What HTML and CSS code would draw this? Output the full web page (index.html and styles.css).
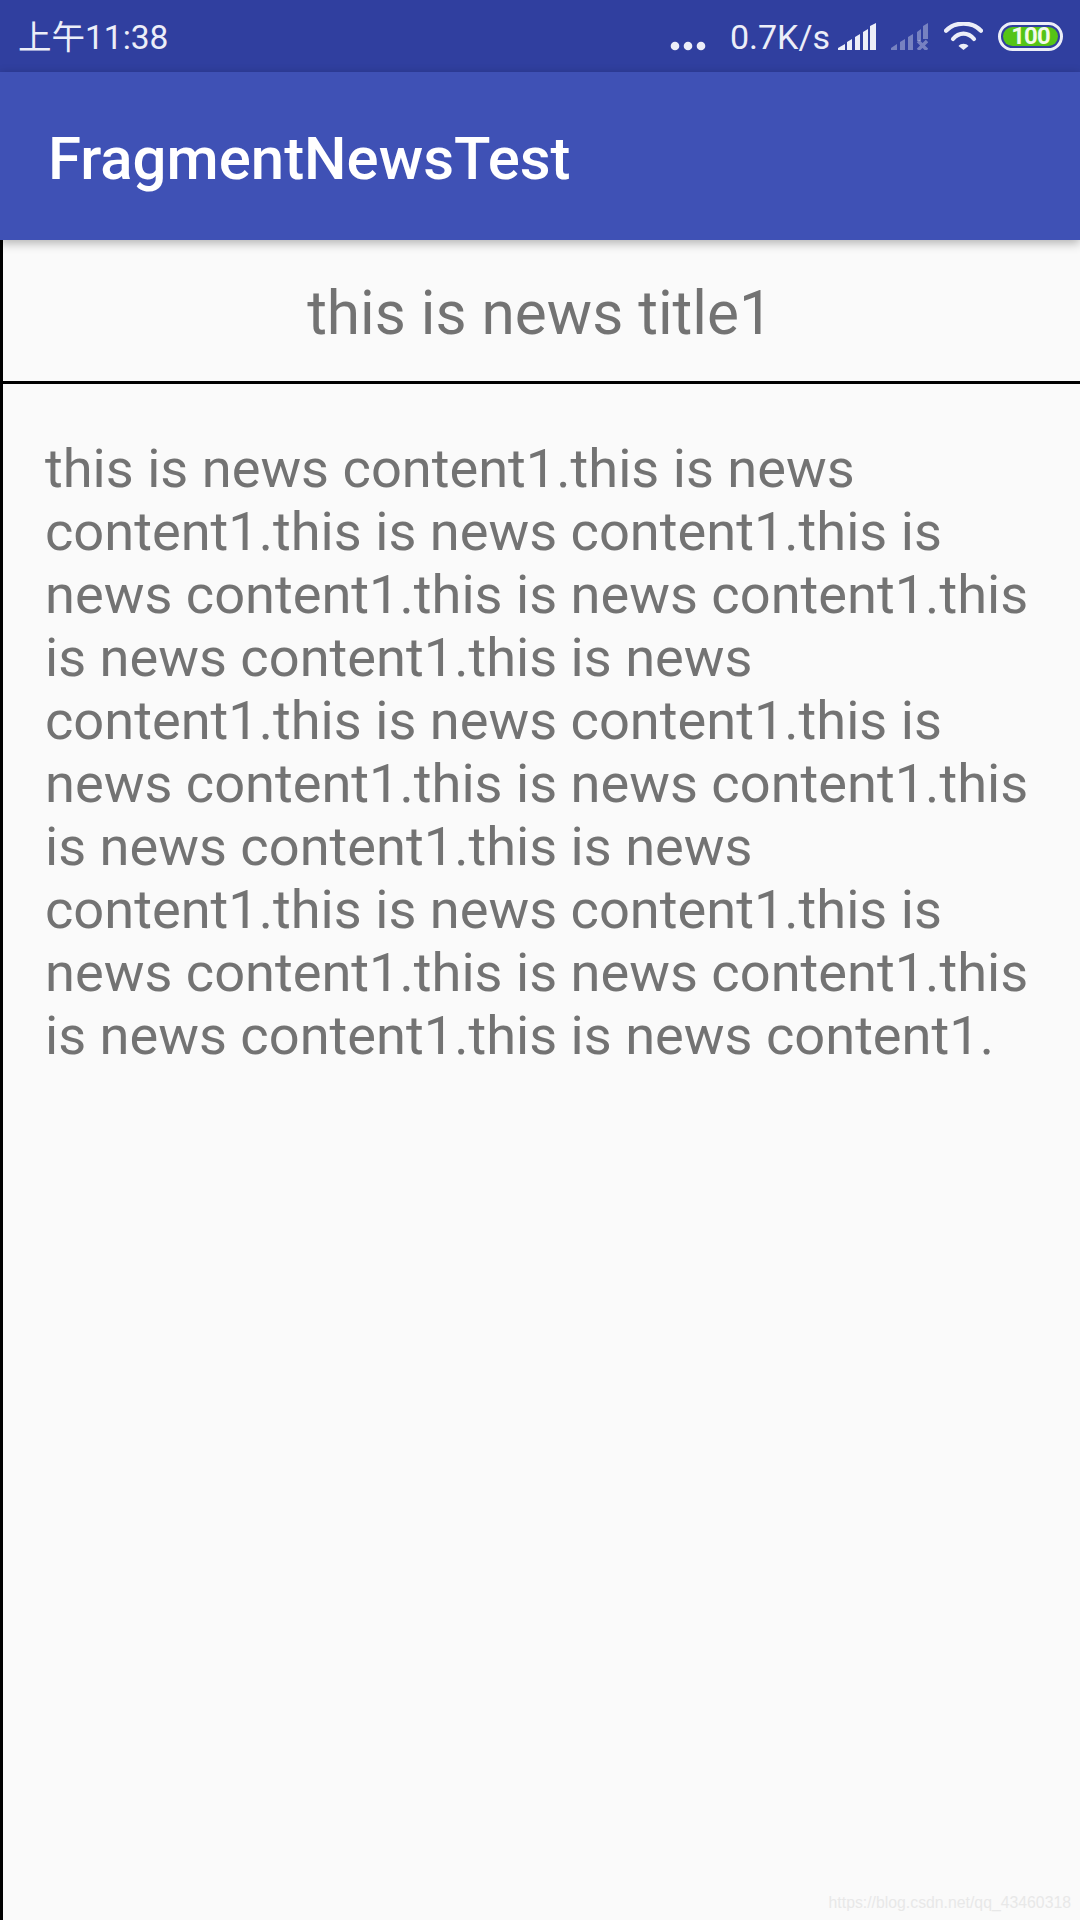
FILE: index.html
```html
<!DOCTYPE html>
<html lang="en">
<head>
    <meta charset="UTF-8">
    <meta name="viewport" content="width=device-width, initial-scale=1.0">
    <title>FragmentNewsTest</title>
    <link rel="stylesheet" href="styles.css">
</head>
<body>
    <div class="status-bar">
        <div class="status-time">上午11:38</div>
        <div class="status-icons">
            <svg class="icon-dots" width="36" height="10" viewBox="0 0 36 10">
                <circle cx="5" cy="5" r="4.3" fill="#eceef8"/>
                <circle cx="18" cy="5" r="4.3" fill="#eceef8"/>
                <circle cx="31" cy="5" r="4.3" fill="#eceef8"/>
            </svg>
            <div class="status-speed">0.7K/s</div>
            <svg class="icon-signal" width="38" height="27" viewBox="0 0 38 27">
                <path d="M0 27V25L7 21V27Z M9 27V19L14 16V27Z M17 27V14L22 11V27Z M25 27V9L30 6V27Z M32 27V3L38 0V27Z" fill="#eceef8"/>
            </svg>
            <svg class="icon-signal-off" width="37" height="27" viewBox="0 0 37 27">
                <path d="M0 27V25L6 21V27Z M9 27V19L14 16V27Z M17 27V14L22 11V27Z M26 18V9L30 6V18Z M32 16V3L37 0V16Z" fill="#eceef8" opacity="0.38"/>
                <path d="M27 18L36 27M36 18L27 27" stroke="#eceef8" stroke-width="3.4" opacity="0.38"/>
            </svg>
            <svg class="icon-wifi" width="39" height="28" viewBox="0 0 39 28">
                <path d="M2 8.7C11 -0.8 28 -0.8 37 8.7" fill="none" stroke="#eceef8" stroke-width="4.2" stroke-linecap="round"/>
                <path d="M9 17C15 9.8 24 9.8 30 17" fill="none" stroke="#eceef8" stroke-width="4.2" stroke-linecap="round"/>
                <path d="M19.5 28L14.5 24C17 21 22 21 24.5 24Z" fill="#eceef8"/>
            </svg>
            <div class="battery">
                <div class="battery-level">100</div>
            </div>
        </div>
    </div>
    <div class="app-bar">FragmentNewsTest</div>
    <div class="news-page">
        <div class="news-title">this is news title1</div>
        <div class="news-content">this is news content1.this is news content1.this is news content1.this is news content1.this is news content1.this is news content1.this is news content1.this is news content1.this is news content1.this is news content1.this is news content1.this is news content1.this is news content1.this is news content1.this is news content1.this is news content1.this is news content1.</div>
    </div>
    <div class="watermark">https://blog.csdn.net/qq_43460318</div>
</body>
</html>
```

FILE: styles.css
```css
body {
    margin: 0;
    width: 1080px;
    height: 1920px;
    overflow: hidden;
    display: flex;
    flex-direction: column;
    position: relative;
    background: #fafafa;
    font-family: Roboto, "Noto Sans CJK SC", sans-serif;
}

.status-bar {
    height: 72px;
    flex: none;
    display: flex;
    align-items: center;
    justify-content: space-between;
    padding: 0 17px 0 18px;
    box-sizing: border-box;
    background: #303f9f;
    color: #eceef8;
}

.status-time {
    font-size: 33.5px;
    margin-bottom: 4px;
}

.status-icons {
    display: flex;
    align-items: center;
}

.icon-dots {
    margin-top: 19px;
    margin-right: 24px;
}

.status-speed {
    font-size: 34px;
    margin-top: 2px;
    margin-right: 8px;
}

.icon-signal {
    margin-right: 15px;
}

.icon-signal-off {
    margin-right: 16px;
}

.icon-wifi {
    margin-right: 15px;
}

.battery {
    width: 65px;
    height: 29px;
    box-sizing: border-box;
    padding: 2px;
    border: 3px solid #eceef8;
    border-radius: 15px;
}

.battery-level {
    height: 100%;
    border-radius: 10px;
    background: #55c416;
    color: #f2fbe9;
    font-size: 24px;
    font-weight: 700;
    letter-spacing: -1px;
    line-height: 19px;
    text-align: center;
}

.app-bar {
    height: 168px;
    flex: none;
    position: relative;
    z-index: 1;
    display: flex;
    align-items: center;
    padding-left: 48px;
    box-sizing: border-box;
    padding-top: 5px;
    background: #3f51b5;
    box-shadow: 0 3px 10px rgba(0, 0, 0, 0.3);
    color: #fff;
    font-size: 59.9px;
    font-weight: 500;
}

.news-page {
    flex: 1;
    border-left: 3px solid #000;
    color: #737373;
}

.news-title {
    height: 144px;
    box-sizing: border-box;
    padding: 5px 3px 0 0;
    display: flex;
    align-items: center;
    justify-content: center;
    border-bottom: 3px solid #000;
    font-size: 60.3px;
}

.news-content {
    padding: 53px 40px 45px 42px;
    font-size: 54.2px;
    line-height: 63px;
}

.watermark {
    position: absolute;
    right: 9px;
    bottom: 8px;
    font-family: "Liberation Sans", sans-serif;
    font-size: 15.8px;
    color: #e8e8e8;
}
```
